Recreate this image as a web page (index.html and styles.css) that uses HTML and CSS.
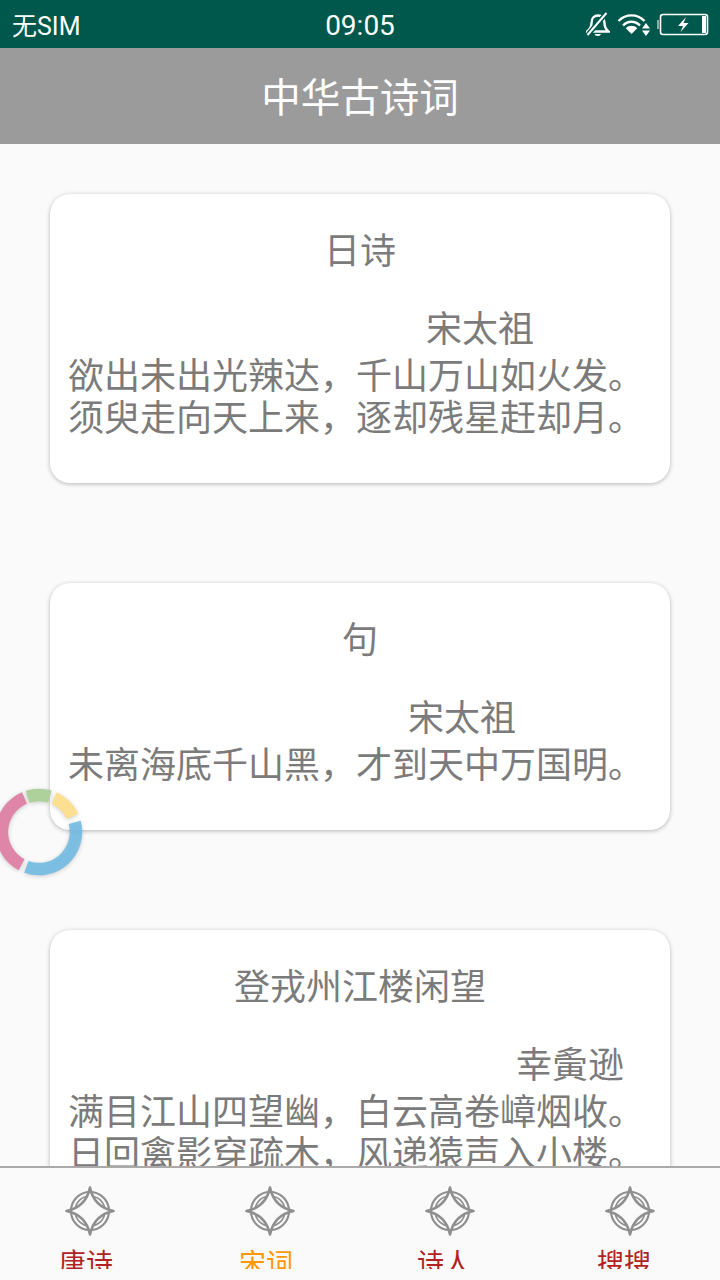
FILE: index.html
```html
<!DOCTYPE html>
<html>
	<head>
		<meta charset="UTF-8">
		<title>中华古诗词</title>
		<link rel="stylesheet" href="styles.css">
	</head>
	<body>
		<div class="page">
			<!--状态栏-->
			<div class="status">
				<span class="carrier">无SIM</span>
				<span class="clock">09:05</span>
				<div class="status-icons">
					<svg class="bell" width="24" height="24" viewBox="0 0 24 24">
						<path d="M1 19.500C4 17.500 5.500 15 5.500 11C5.500 6.500 8 3.500 12 3.500C16 3.500 18.500 6.500 18.500 11C18.500 15 20 17.500 22.500 19.500Z" fill="none" stroke="#fff" stroke-width="2.400"/>
						<path d="M8.500 22H15L14 23.500C13 24 10.500 24 9.500 23.500Z" fill="#fff"/>
						<path d="M20.500 1L2.500 22" stroke="#00574b" stroke-width="5"/>
						<path d="M20.500 1L1.500 23" stroke="#fff" stroke-width="2"/>
					</svg>
					<svg class="wifi" width="34" height="24" viewBox="0 0 34 24">
						<path d="M1.500 9C9 1.500 20 1.500 27.500 9" fill="none" stroke="#fff" stroke-width="2.400"/>
						<path d="M6 13.500C11 8.500 18 8.500 23 13.500" fill="none" stroke="#fff" stroke-width="2.400"/>
						<path d="M14.500 22L8.800 16.200C12 13 17 13 20.200 16.200Z" fill="#fff"/>
						<path d="M29 11L33 16.500H25Z M29 24L25 18.500H33Z" fill="#fff"/>
					</svg>
					<svg class="battery" width="54" height="24" viewBox="0 0 54 24">
						<path d="M3 8V17" stroke="#fff" stroke-width="1.500" opacity=".7"/>
						<rect x="5.500" y="2.500" width="47" height="20" rx="2.500" fill="none" stroke="#fff" stroke-width="1.600"/>
						<rect x="47" y="4" width="4" height="17" fill="#fff"/>
						<path d="M31 5L23 14H28L25.500 20L33.500 11H28.500Z" fill="#fff"/>
					</svg>
				</div>
			</div>

			<!--标题栏-->
			<div class="header">中华古诗词</div>

			<!--诗词列表-->
			<div class="list">
				<div class="card">
					<div class="title">日诗</div>
					<div class="author author-a">宋太祖</div>
					<div class="poem">欲出未出光辣达，千山万山如火发。须臾走向天上来，逐却残星赶却月。</div>
				</div>
				<div class="card">
					<div class="title">句</div>
					<div class="author author-b">宋太祖</div>
					<div class="poem">未离海底千山黑，才到天中万国明。</div>
				</div>
				<div class="card">
					<div class="title">登戎州江楼闲望</div>
					<div class="author author-c">幸夤逊</div>
					<div class="poem">满目江山四望幽，白云高卷嶂烟收。日回禽影穿疏木，风递猿声入小楼。</div>
				</div>
			</div>

			<!--底部导航-->
			<div class="tabs">
				<div class="tab tab-red">
					<svg class="tab-icon" width="50" height="50" viewBox="0 0 50 50"><use href="#compass"/></svg>
					<span class="tab-text">唐诗</span>
				</div>
				<div class="tab tab-orange">
					<svg class="tab-icon" width="50" height="50" viewBox="0 0 50 50"><use href="#compass"/></svg>
					<span class="tab-text">宋词</span>
				</div>
				<div class="tab tab-red">
					<svg class="tab-icon" width="50" height="50" viewBox="0 0 50 50"><use href="#compass"/></svg>
					<span class="tab-text tab-text-left">诗人</span>
				</div>
				<div class="tab tab-red">
					<svg class="tab-icon" width="50" height="50" viewBox="0 0 50 50"><use href="#compass"/></svg>
					<span class="tab-text tab-text-left">搜搜</span>
				</div>
			</div>

			<!--悬浮球-->
			<svg class="ball" width="100" height="100" viewBox="0 0 100 100">
				<g fill="none" stroke-width="12.500">
					<path d="M85.700 40.400A37 37 0 0 1 37.300 84.800" stroke="#6fbbe3" stroke-opacity=".88"/>
					<path d="M32.600 82.700A37 37 0 0 1 35.500 15.900" stroke="#df86a8"/>
					<path d="M38.600 14.800A37 37 0 0 1 60.800 14.600" stroke="#aed09a"/>
					<path d="M65.100 16.200A37 37 0 0 1 83.500 34.300" stroke="#fddf92"/>
				</g>
			</svg>
		</div>

		<!--导航图标-->
		<svg class="defs" width="0" height="0">
			<defs>
				<g id="compass" fill="none" stroke="#8f8f8f">
					<circle cx="25" cy="25" r="19" stroke-width="2.200"/>
					<circle cx="25" cy="25" r="15" stroke-width="1.600"/>
					<path d="M25 1.500Q29 21 48.500 25Q29 29 25 48.500Q21 29 1.500 25Q21 21 25 1.500Z" fill="#fafafa" stroke-width="2.600" stroke-linejoin="round"/>
				</g>
			</defs>
		</svg>
	</body>
</html>
```

FILE: styles.css
```css
*{
	margin: 0;
	padding: 0;
	box-sizing: border-box;
}

body{
	font-family: "Noto Sans CJK SC", sans-serif;
	background-color: #fafafa;
}

.defs{
	position: absolute;
}

.page{
	width: 720px;
	height: 1280px;
	display: flex;
	flex-direction: column;
	overflow: hidden;
	position: relative;
}

/*状态栏*/
.status{
	height: 48px;
	flex: none;
	background-color: #00574b;
	color: #fff;
	display: flex;
	align-items: center;
	justify-content: space-between;
	padding: 0 11px 0 12px;
	position: relative;
	font-family: Roboto, "Noto Sans CJK SC", sans-serif;
}

.carrier{
	font-size: 25px;
}

.clock{
	font-size: 28px;
	line-height: 52px;
	position: absolute;
	top: 0;
	left: 0;
	right: 0;
	text-align: center;
}

.status-icons{
	display: flex;
	align-items: center;
	gap: 7px;
}

.battery{
	margin-left: -3px;
}

/*标题栏*/
.header{
	height: 96px;
	flex: none;
	background-color: #9b9b9b;
	color: #fff;
	font-size: 39.5px;
	padding-bottom: 3px;
	display: flex;
	align-items: center;
	justify-content: center;
}

/*列表*/
.list{
	flex: 1;
	overflow: hidden;
	padding: 50px 50px 0;
}

.card{
	background-color: #fff;
	border-radius: 20px;
	padding: 28px 18px 47px;
	margin-bottom: 100px;
	color: #7b7b7b;
	font-size: 36px;
	box-shadow: 0 1px 4px rgba(0, 0, 0, 0.28);
}

.title{
	text-align: center;
	line-height: 52px;
	margin-bottom: 26px;
}

.author{
	line-height: 52px;
}

.author-a{
	padding-left: 358px;
}

.author-b{
	padding-left: 340px;
}

.author-c{
	padding-left: 448px;
}

.poem{
	line-height: 42px;
}

/*底部导航*/
.tabs{
	height: 114px;
	flex: none;
	display: flex;
	background-color: #fafafa;
	border-top: 2px solid #aaa;
	position: relative;
}

.tab{
	flex: 1;
	height: 101px;
	overflow: hidden;
	display: flex;
	flex-direction: column;
	align-items: center;
	padding-top: 18px;
}

.tab-icon{
	flex: none;
}

.tab-text{
	font-size: 27px;
	line-height: 38px;
	margin-top: 7px;
	padding-right: 8px;
}

.tab-text-left{
	padding-right: 12px;
}

.tab-red{
	color: #b22222;
}

.tab-orange{
	color: #ff9800;
}

/*悬浮球*/
.ball{
	position: absolute;
	left: -11px;
	top: 782px;
	filter: drop-shadow(0 1px 2px rgba(0, 0, 0, 0.2));
}
```
